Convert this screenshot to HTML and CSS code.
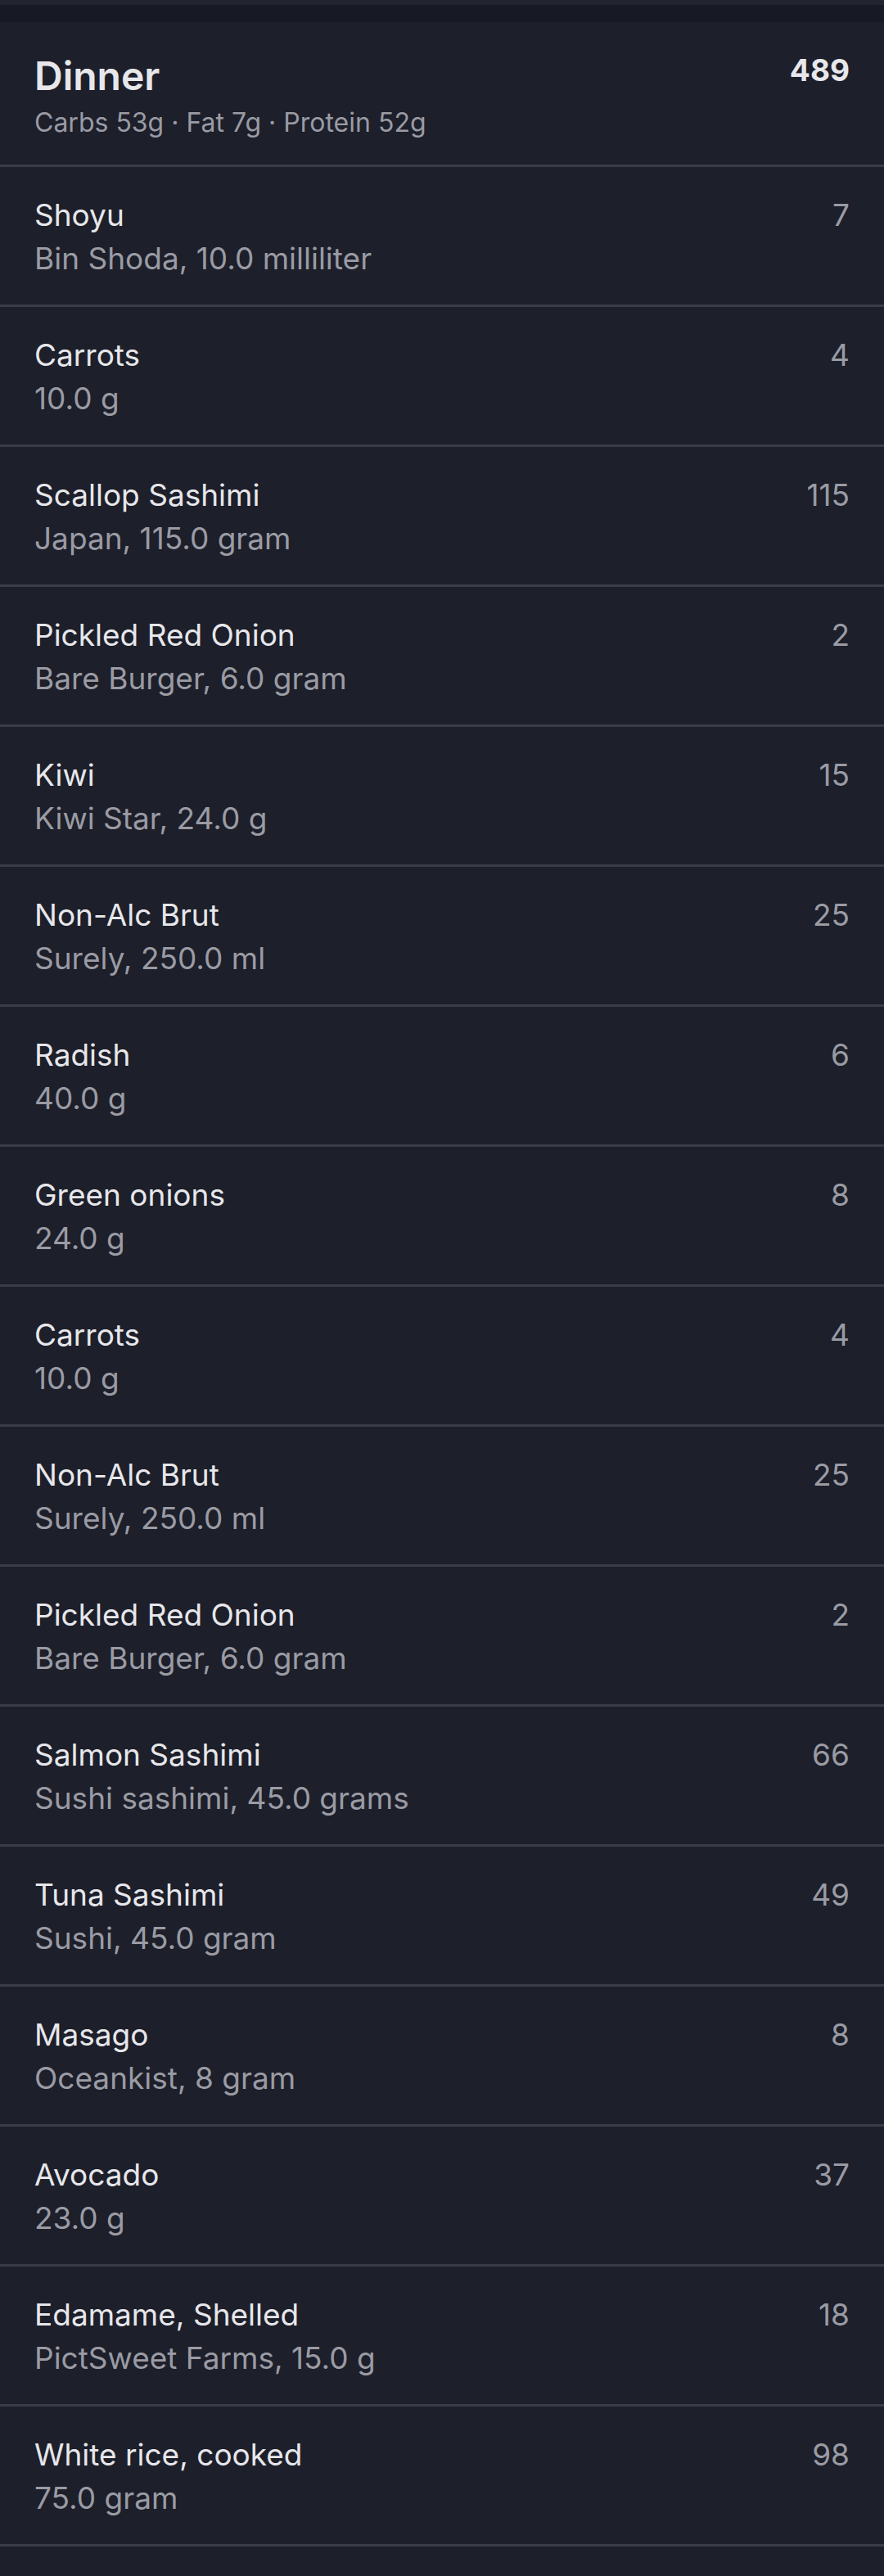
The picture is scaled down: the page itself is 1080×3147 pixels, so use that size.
FILE: index.html
```html
<!DOCTYPE html>
<html lang="en">
<head>
<meta charset="utf-8">
<title>Dinner</title>
<link rel="stylesheet" href="styles.css">
</head>
<body>
<div class="topbar"></div>
<main class="meal">
  <header class="meal-header">
    <div class="meal-info">
      <h1 class="meal-title">Dinner</h1>
      <div class="meal-macros">Carbs 53g · Fat 7g · Protein 52g</div>
    </div>
    <div class="meal-total">489</div>
  </header>
  <ul class="food-list">
    <li class="food"><div class="food-text"><div class="food-name">Shoyu</div><div class="food-detail">Bin Shoda, 10.0 milliliter</div></div><div class="food-cal">7</div></li>
    <li class="food"><div class="food-text"><div class="food-name">Carrots</div><div class="food-detail">10.0 g</div></div><div class="food-cal">4</div></li>
    <li class="food"><div class="food-text"><div class="food-name">Scallop Sashimi</div><div class="food-detail">Japan, 115.0 gram</div></div><div class="food-cal">115</div></li>
    <li class="food"><div class="food-text"><div class="food-name">Pickled Red Onion</div><div class="food-detail">Bare Burger, 6.0 gram</div></div><div class="food-cal">2</div></li>
    <li class="food"><div class="food-text"><div class="food-name">Kiwi</div><div class="food-detail">Kiwi Star, 24.0 g</div></div><div class="food-cal">15</div></li>
    <li class="food"><div class="food-text"><div class="food-name">Non-Alc Brut</div><div class="food-detail">Surely, 250.0 ml</div></div><div class="food-cal">25</div></li>
    <li class="food"><div class="food-text"><div class="food-name">Radish</div><div class="food-detail">40.0 g</div></div><div class="food-cal">6</div></li>
    <li class="food"><div class="food-text"><div class="food-name">Green onions</div><div class="food-detail">24.0 g</div></div><div class="food-cal">8</div></li>
    <li class="food"><div class="food-text"><div class="food-name">Carrots</div><div class="food-detail">10.0 g</div></div><div class="food-cal">4</div></li>
    <li class="food"><div class="food-text"><div class="food-name">Non-Alc Brut</div><div class="food-detail">Surely, 250.0 ml</div></div><div class="food-cal">25</div></li>
    <li class="food"><div class="food-text"><div class="food-name">Pickled Red Onion</div><div class="food-detail">Bare Burger, 6.0 gram</div></div><div class="food-cal">2</div></li>
    <li class="food"><div class="food-text"><div class="food-name">Salmon Sashimi</div><div class="food-detail">Sushi sashimi, 45.0 grams</div></div><div class="food-cal">66</div></li>
    <li class="food"><div class="food-text"><div class="food-name">Tuna Sashimi</div><div class="food-detail">Sushi, 45.0 gram</div></div><div class="food-cal">49</div></li>
    <li class="food"><div class="food-text"><div class="food-name">Masago</div><div class="food-detail">Oceankist, 8 gram</div></div><div class="food-cal">8</div></li>
    <li class="food"><div class="food-text"><div class="food-name">Avocado</div><div class="food-detail">23.0 g</div></div><div class="food-cal">37</div></li>
    <li class="food"><div class="food-text"><div class="food-name">Edamame, Shelled</div><div class="food-detail">PictSweet Farms, 15.0 g</div></div><div class="food-cal">18</div></li>
    <li class="food"><div class="food-text"><div class="food-name">White rice, cooked</div><div class="food-detail">75.0 gram</div></div><div class="food-cal">98</div></li>
  </ul>
</main>
</body>
</html>
```
FILE: styles.css
```css
html, body {
  margin: 0;
  padding: 0;
  background: #1d1f2a;
}
body {
  font-family: Inter, "Noto Sans", "Liberation Sans", sans-serif;
  color: #e7e7eb;
  min-height: 3147px;
}
.topbar {
  height: 21px;
  border-top: 6px solid #222430;
  background: #171924;
}
.meal-header {
  display: flex;
  justify-content: space-between;
  align-items: flex-start;
  padding: 37px 42px 29px 42px;
  border-bottom: 3px solid #3a3c48;
}
.meal-info {
  display: flex;
  flex-direction: column;
  gap: 6px;
}
.meal-title {
  margin: 0;
  font-size: 48px;
  line-height: 58px;
  font-weight: 600;
  color: #e7e7eb;
}
.meal-macros {
  font-size: 32px;
  line-height: 44px;
  color: #9a9ba4;
}
.meal-total {
  font-size: 37px;
  line-height: 44px;
  font-weight: 700;
  color: #e7e7eb;
}
.food-list {
  list-style: none;
  margin: 0;
  padding: 0;
}
.food {
  display: flex;
  justify-content: space-between;
  align-items: flex-start;
  padding: 32px 42px 30px 42px;
  border-bottom: 3px solid #3a3c48;
}
.food-text {
  display: flex;
  flex-direction: column;
}
.food-name {
  font-size: 37px;
  line-height: 53px;
  color: #e7e7eb;
}
.food-detail {
  font-size: 37px;
  line-height: 53px;
  color: #9a9ba4;
}
.food-cal {
  font-size: 37px;
  line-height: 53px;
  color: #9a9ba4;
}
```
